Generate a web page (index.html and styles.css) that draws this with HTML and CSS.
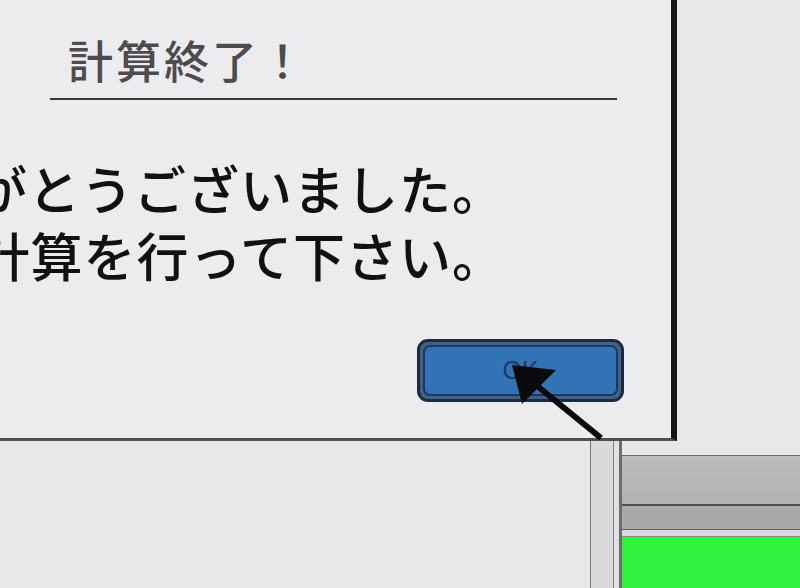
FILE: index.html
```html
<!DOCTYPE html>
<html lang="ja">
<head>
  <meta charset="UTF-8" />
  <meta name="viewport" content="width=device-width, initial-scale=1.0" />
  <title>計算終了</title>
  <link rel="stylesheet" href="styles.css">
</head>
<body>
  <div class="desk">
    <div class="desk-space"></div>
    <div class="rail">
      <div class="rail-main"></div>
      <div class="rail-edge"></div>
    </div>
    <div class="panel">
      <div class="bar-top"></div>
      <div class="bar-mid"></div>
      <div class="bar-gap"></div>
      <div class="meter"></div>
    </div>
  </div>

  <div class="dialog">
    <div class="dialog-head">計算終了！</div>
    <div class="dialog-msg">
      <span>ご利用ありがとうございました。</span>
      <span>もう一度計算を行って下さい。</span>
    </div>
    <div class="dialog-foot">
      <button class="ok-btn"><span class="ok-face">OK</span></button>
    </div>
  </div>

  <!-- mouse pointer over the OK button -->
  <svg class="cursor" width="110" height="90" viewBox="0 0 110 90">
    <line x1="36" y1="30" x2="101" y2="83" stroke="#0a0a0a" stroke-width="6" />
    <polygon points="12,10 56,15 22,49" fill="#0a0a0a" />
  </svg>
</body>
</html>
```

FILE: styles.css
```css
body {
  margin: 0;
  background-color: #e8e8ea;
  font-family: "Noto Sans CJK JP", "Noto Sans", sans-serif;
  overflow: hidden;
}
.desk {
  display: flex;
  height: 588px;
}
.desk-space {
  width: 590px;
}
.rail {
  display: flex;
  width: 32px;
}
.rail-main {
  width: 22px;
  background-color: #dadadd;
  border-left: 1px solid #77777a;
  border-right: 1px solid #7e7e81;
}
.rail-edge {
  width: 5px;
  background-color: #e0e0e2;
  border-right: 3px solid #6c6c6f;
}
.panel {
  flex: 1;
  display: flex;
  flex-direction: column;
  padding-top: 455px;
}
.bar-top {
  height: 48px;
  border-top: 1px solid #6a6a6d;
  border-bottom: 2px solid #4e4e51;
  background: linear-gradient(#bcbcbf, #b2b2b5);
}
.bar-mid {
  height: 23px;
  border-bottom: 1px solid #5e5e61;
  background-color: #a8a8ab;
}
.bar-gap {
  height: 6px;
  border-bottom: 1px solid #8a8a8d;
  background-color: #d9d9dc;
}
.meter {
  flex: 1;
  background-color: #2ef23b;
}

.dialog {
  position: absolute;
  left: -40px;
  top: -60px;
  width: 711px;
  height: 498px;
  background-color: #ececee;
  border-right: 6px solid #141414;
  border-bottom: 3px solid #505052;
  overflow: hidden;
}
.dialog-head {
  margin: 90px 0 0 90px;
  width: 549px;
  padding: 0 0 8px 18px;
  line-height: 60px;
  font-size: 45px;
  font-weight: 500;
  letter-spacing: 3px;
  color: #4c4c4e;
  border-bottom: 2px solid #38383a;
}
.dialog-msg {
  display: flex;
  flex-direction: column;
  align-items: flex-end;
  width: 545px;
  margin-top: 54px;
  font-size: 52px;
  font-weight: 500;
  letter-spacing: 1px;
  line-height: 67px;
  color: #111;
  white-space: nowrap;
}
.dialog-foot {
  display: flex;
  justify-content: flex-end;
  padding: 51px 47px 0 0;
}
.ok-btn {
  width: 207px;
  height: 63px;
  padding: 3px;
  border: 3px solid #1b2c42;
  border-radius: 11px;
  background-color: #3f6288;
  box-sizing: border-box;
}
.ok-face {
  display: flex;
  align-items: center;
  justify-content: center;
  height: 100%;
  border: 2px solid #1f3857;
  border-radius: 7px;
  background-color: #3273b6;
  box-sizing: border-box;
  font-family: "Liberation Sans", sans-serif;
  font-size: 25px;
  color: #173c68;
}
.cursor {
  position: absolute;
  left: 500px;
  top: 355px;
}
```
